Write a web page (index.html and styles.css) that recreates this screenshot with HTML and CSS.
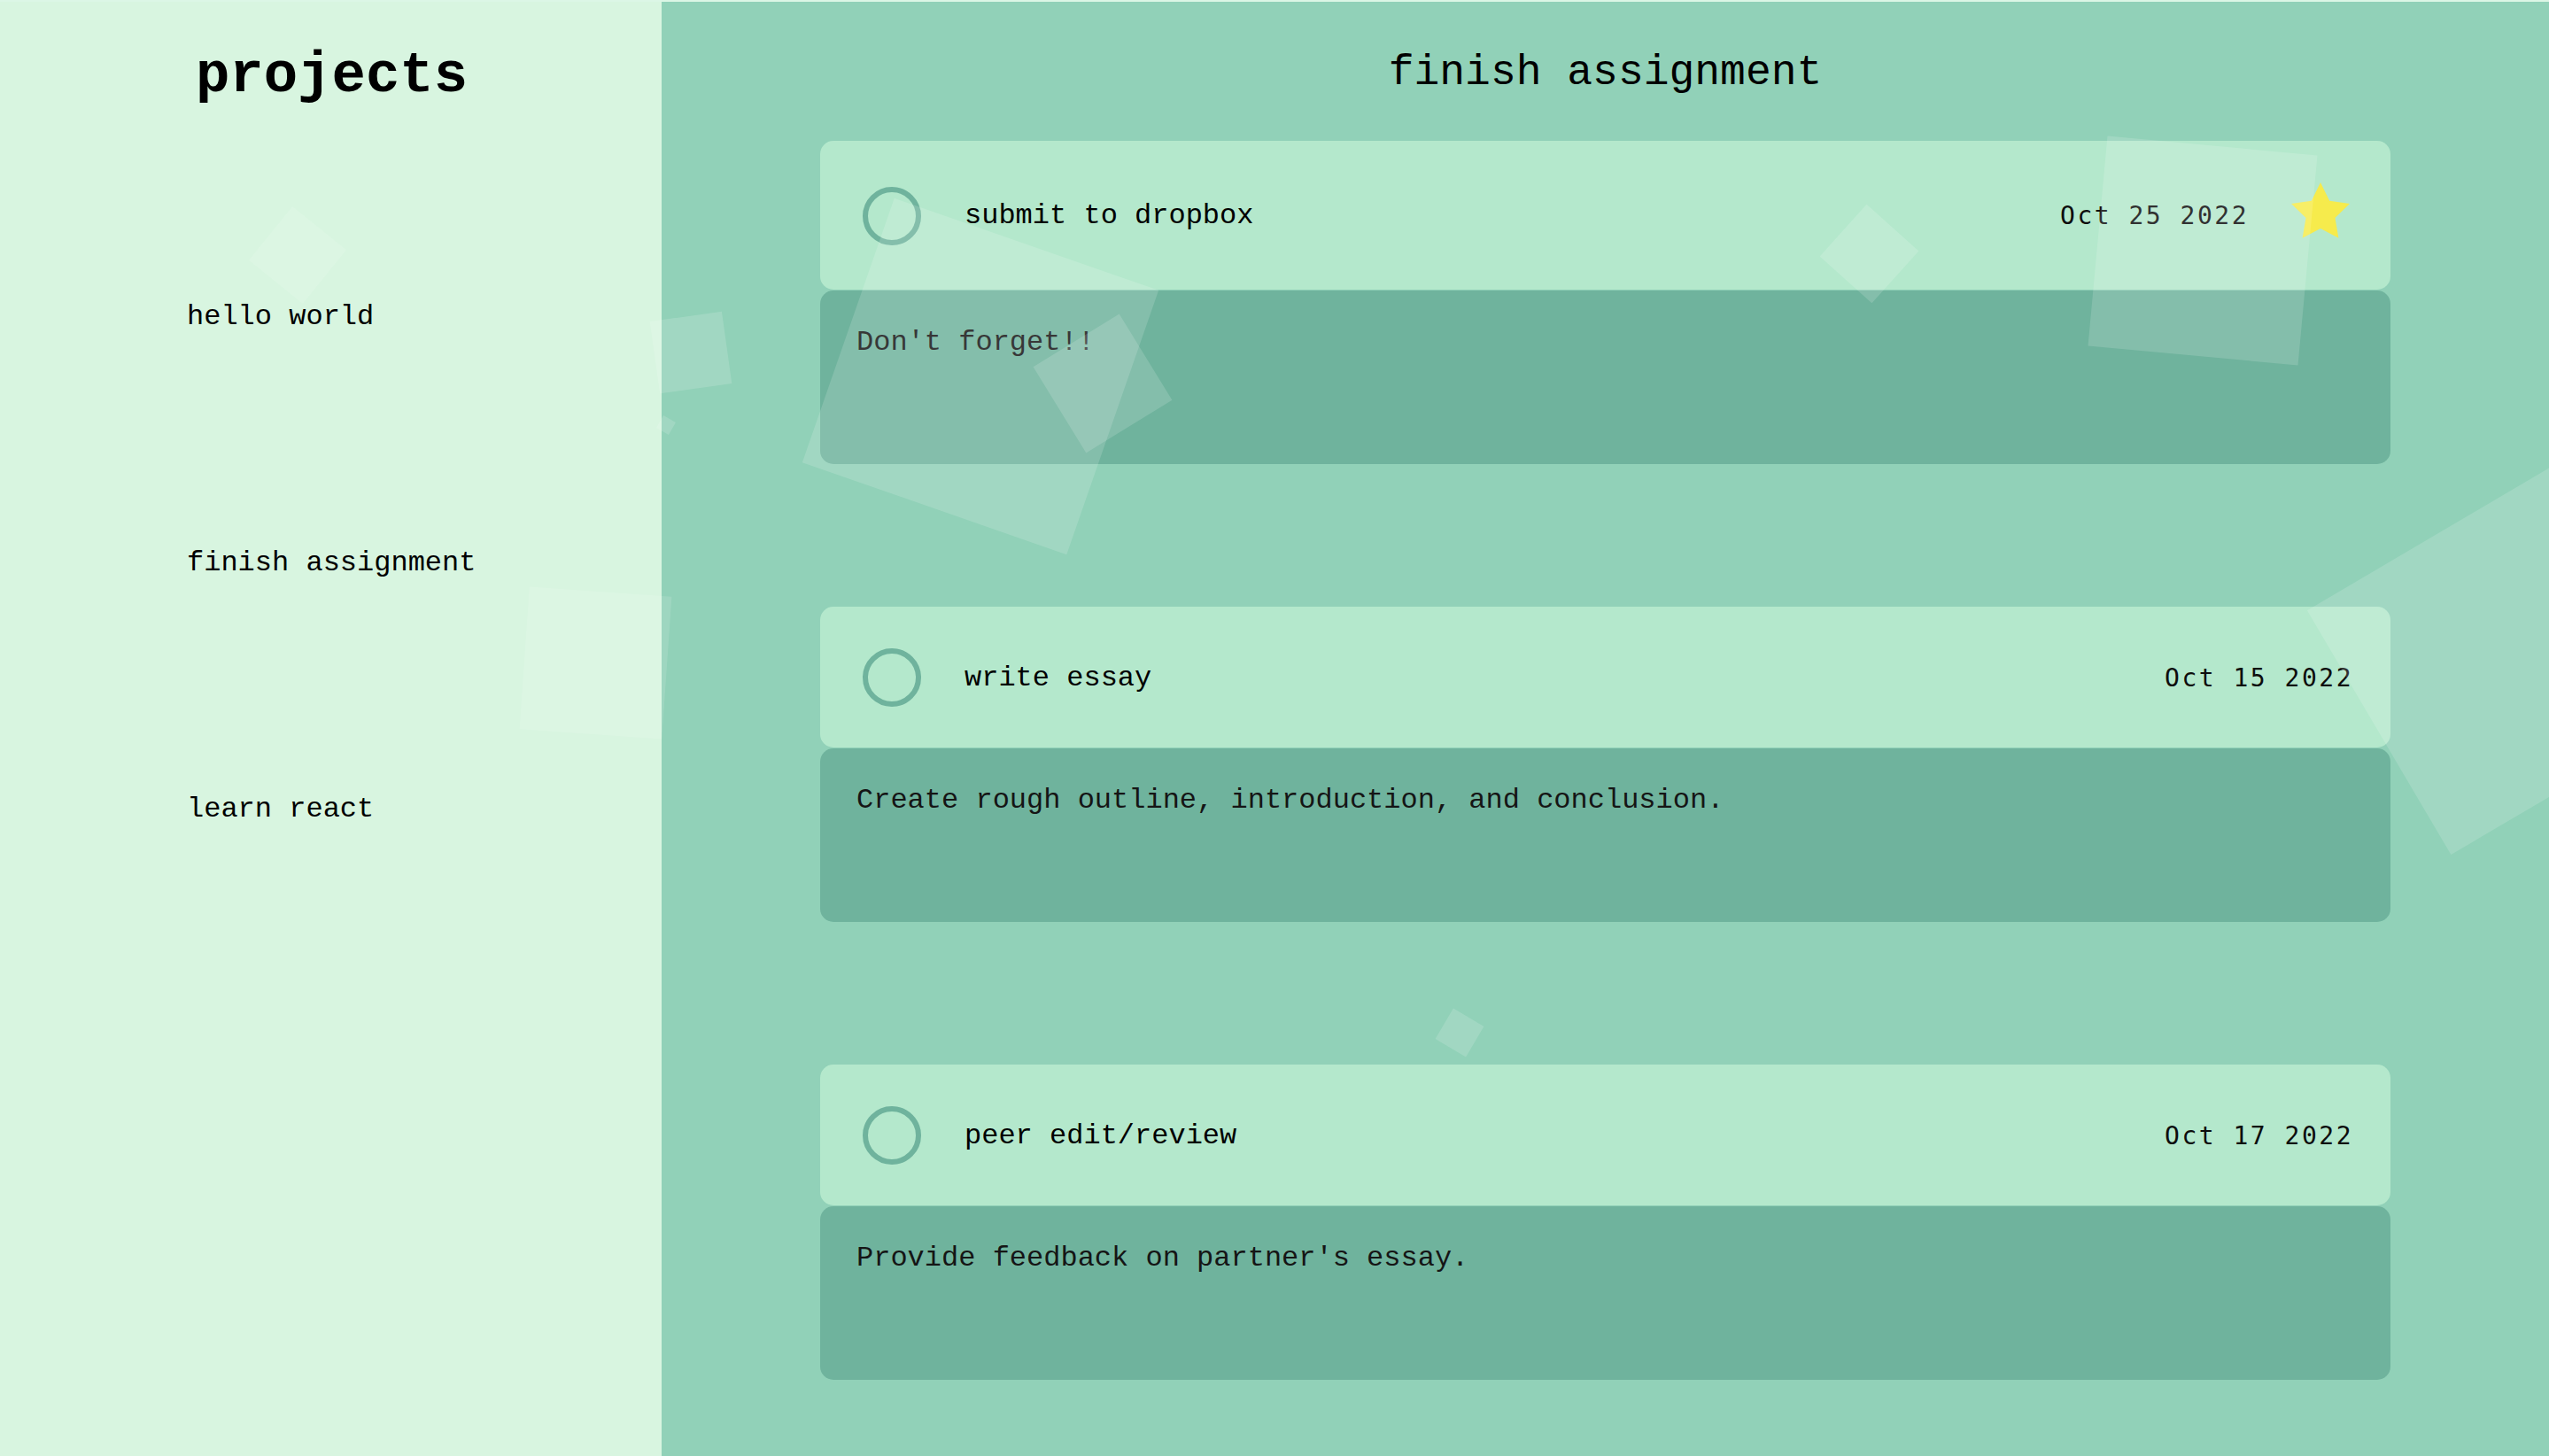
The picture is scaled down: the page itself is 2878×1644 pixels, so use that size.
FILE: index.html
```html
<!DOCTYPE html>
<html lang="en">
<head>
<meta charset="utf-8">
<title>finish assignment</title>
<link rel="stylesheet" href="styles.css">
</head>
<body>
<div class="app">
  <aside class="sidebar">
    <h1 class="sidebar-title">projects</h1>
    <ul class="project-list">
      <li class="project-item">hello world</li>
      <li class="project-item">finish assignment</li>
      <li class="project-item">learn react</li>
    </ul>
  </aside>
  <main class="main">
    <h2 class="main-title">finish assignment</h2>
    <div class="tasks">
      <article class="task">
        <div class="task-head">
          <span class="check"></span>
          <span class="task-title">submit to dropbox</span>
          <span class="task-date">Oct 25 2022</span>
          <svg class="star" viewBox="0.79 2 22.42 22.73" aria-hidden="true"><path d="M12 2l3.09 6.26L22 9.27l-5 4.87 1.18 6.88L12 17.77l-6.18 3.25L7 14.14 2 9.27l6.91-1.01L12 2z"/></svg>
        </div>
        <div class="task-body">Don't forget!!</div>
      </article>
      <article class="task">
        <div class="task-head">
          <span class="check"></span>
          <span class="task-title">write essay</span>
          <span class="task-date">Oct 15 2022</span>
        </div>
        <div class="task-body">Create rough outline, introduction, and conclusion.</div>
      </article>
      <article class="task">
        <div class="task-head">
          <span class="check"></span>
          <span class="task-title">peer edit/review</span>
          <span class="task-date">Oct 17 2022</span>
        </div>
        <div class="task-body">Provide feedback on partner's essay.</div>
      </article>
    </div>
  </main>
  <div class="shapes" aria-hidden="true">
    <span class="shape s1"></span>
    <span class="shape s2"></span>
    <span class="shape s2b"></span>
    <span class="shape s3"></span>
    <span class="shape s4"></span>
    <span class="shape s5"></span>
    <span class="shape s6"></span>
    <span class="shape s7"></span>
    <span class="shape s8"></span>
    <span class="shape s9"></span>
  </div>
</div>
</body>
</html>
```

FILE: styles.css
```css
* { box-sizing: border-box; }
html, body {
  margin: 0;
  padding: 0;
  height: 100%;
  overflow: hidden;
}
body {
  font-family: "Liberation Mono", "Courier New", monospace;
  color: #000;
  background: #dcf6e6;
}
.app {
  position: relative;
  display: flex;
  margin-top: 2px;
  height: 1642px;
  width: 2878px;
  overflow: hidden;
}
.sidebar {
  width: 747px;
  flex: 0 0 747px;
  background: #d8f5e0;
  padding-top: 48px;
}
.sidebar-title {
  margin: 0;
  text-align: center;
  font-size: 64px;
  font-weight: bold;
  line-height: normal;
  padding-left: 2px;
}
.project-list {
  list-style: none;
  margin: 217px 0 0 0;
  padding: 0 0 0 211px;
  display: flex;
  flex-direction: column;
  gap: 241px;
}
.project-item {
  font-size: 32px;
  line-height: normal;
}
.main {
  flex: 1;
  background: #91d1b8;
  padding-top: 53px;
}
.main-title {
  margin: 0;
  text-align: center;
  font-size: 48px;
  font-weight: normal;
  line-height: normal;
}
.tasks {
  margin-top: 50px;
  padding: 0 179px;
  display: flex;
  flex-direction: column;
  gap: 161px;
}
.task {
  display: flex;
  flex-direction: column;
  gap: 1px;
}
.task-head {
  display: flex;
  align-items: center;
  background: #b4e8cc;
  border-radius: 15px;
  padding: 47px 42px 46px 48px;
}
.check {
  width: 66px;
  height: 66px;
  flex: 0 0 66px;
  border: 6px solid #6fb39d;
  border-radius: 50%;
}
.task-title {
  font-size: 32px;
  line-height: normal;
  margin-left: 49px;
  flex: 1;
}
.task-date {
  font-family: "DejaVu Sans Mono", monospace;
  font-size: 28px;
  letter-spacing: 2.5px;
  color: #0d0d0d;
  line-height: normal;
}
.star {
  width: 74px;
  height: 75px;
  margin-left: 44px;
  fill: #f6eb4c;
  flex: 0 0 74px;
}
.task-body {
  background: #6fb39d;
  border-radius: 15px;
  min-height: 196px;
  padding: 40px 41px;
  font-size: 32px;
  line-height: normal;
  color: #151515;
}
.shapes {
  position: absolute;
  inset: 0;
  pointer-events: none;
}
.shape {
  position: absolute;
  display: block;
  background: rgba(255, 255, 255, 0.15);
}
.s1 { left: 297px; top: 247px; width: 78px; height: 78px; transform: rotate(39deg); background: rgba(255,255,255,0.12); }
.s2 { left: 739px; top: 355px; width: 82px; height: 82px; transform: rotate(-8deg); }
.s2b { left: 744px; top: 470px; width: 16px; height: 16px; transform: rotate(30deg); }
.s3 { left: 949px; top: 265px; width: 316px; height: 316px; transform: rotate(19.2deg); }
.s4 { left: 1188px; top: 374px; width: 114px; height: 114px; transform: rotate(-31.6deg); }
.s5 { left: 2071px; top: 245px; width: 79px; height: 79px; transform: rotate(42deg); }
.s6 { left: 2368px; top: 162px; width: 238px; height: 238px; transform: rotate(5.3deg); }
.s7 { left: 2664px; top: 584px; width: 320px; height: 320px; transform: rotate(-30.5deg); }
.s8 { left: 592px; top: 666px; width: 161px; height: 161px; transform: rotate(4deg); background: rgba(255,255,255,0.12); }
.s9 { left: 1628px; top: 1144px; width: 40px; height: 40px; transform: rotate(30.5deg); }
```
